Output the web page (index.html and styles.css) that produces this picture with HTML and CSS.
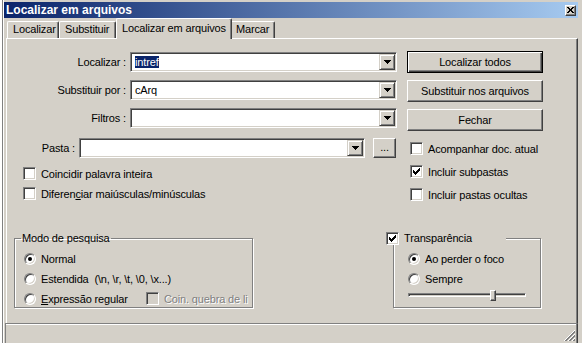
FILE: index.html
```html
<!DOCTYPE html>
<html lang="pt">

<head>
    <meta charset="UTF-8">
    <meta name="viewport" content="width=device-width, initial-scale=1.0">
    <title>Localizar em arquivos</title>
    <link rel="stylesheet" href="styles.css">
</head>

<body>
    <div class="window">
        <div class="titlebar">
            <span class="title">Localizar em arquivos</span>
            <span class="close-btn">
                <svg width="7" height="6" viewBox="0 0 7 6" shape-rendering="crispEdges">
                    <path d="M0 0h2v1h-2z M5 0h2v1h-2z M1 1h2v1h-2z M4 1h2v1h-2z M2 2h3v2h-3z M1 4h2v1h-2z M4 4h2v1h-2z M0 5h2v1h-2z M5 5h2v1h-2z" fill="#000" />
                </svg>
            </span>
        </div>

        <div class="tabs">
            <div class="tab tab-find">Localizar</div>
            <div class="tab tab-replace">Substituir</div>
            <div class="tab tab-files active">Localizar em arquivos</div>
            <div class="tab tab-mark">Marcar</div>
        </div>

        <div class="panel">
            <div class="top">
                <div class="fields">
                    <div class="field-row">
                        <label class="field-label">Localizar :</label>
                        <div class="combo combo-wide">
                            <span class="combo-text"><span class="selected">intref</span></span>
                            <span class="combo-btn"><svg width="7" height="4" viewBox="0 0 7 4" shape-rendering="crispEdges"><path d="M0 0h7v1H0z M1 1h5v1H1z M2 2h3v1H2z M3 3h1v1H3z" fill="#000" /></svg></span>
                        </div>
                    </div>
                    <div class="field-row">
                        <label class="field-label">Substituir por :</label>
                        <div class="combo combo-wide">
                            <span class="combo-text">cArq</span>
                            <span class="combo-btn"><svg width="7" height="4" viewBox="0 0 7 4" shape-rendering="crispEdges"><path d="M0 0h7v1H0z M1 1h5v1H1z M2 2h3v1H2z M3 3h1v1H3z" fill="#000" /></svg></span>
                        </div>
                    </div>
                    <div class="field-row">
                        <label class="field-label">Filtros :</label>
                        <div class="combo combo-wide">
                            <span class="combo-text"></span>
                            <span class="combo-btn"><svg width="7" height="4" viewBox="0 0 7 4" shape-rendering="crispEdges"><path d="M0 0h7v1H0z M1 1h5v1H1z M2 2h3v1H2z M3 3h1v1H3z" fill="#000" /></svg></span>
                        </div>
                    </div>
                    <div class="field-row folder">
                        <label class="field-label">Pasta :</label>
                        <div class="combo combo-folder">
                            <span class="combo-text"></span>
                            <span class="combo-btn"><svg width="7" height="4" viewBox="0 0 7 4" shape-rendering="crispEdges"><path d="M0 0h7v1H0z M1 1h5v1H1z M2 2h3v1H2z M3 3h1v1H3z" fill="#000" /></svg></span>
                        </div>
                        <span class="btn browse-btn">...</span>
                    </div>

                    <div class="check-row first">
                        <span class="checkbox"></span>
                        <span>Coincidir palavra inteira</span>
                    </div>
                    <div class="check-row">
                        <span class="checkbox"></span>
                        <span>Diferen<u>c</u>iar maiúsculas/minúsculas</span>
                    </div>
                </div>

                <div class="actions">
                    <span class="btn default">Localizar todos</span>
                    <span class="btn">Substituir nos arquivos</span>
                    <span class="btn">Fechar</span>

                    <div class="check-row">
                        <span class="checkbox"></span>
                        <span>Acompanhar doc. atual</span>
                    </div>
                    <div class="check-row">
                        <span class="checkbox"><svg width="7" height="7" viewBox="0 0 7 7" shape-rendering="crispEdges"><path d="M6 0h1v1h-1z M5 1h2v1h-2z M0 2h1v1h-1z M4 2h3v1h-3z M0 3h2v1h-2z M3 3h3v1h-3z M0 4h5v1h-5z M1 5h3v1h-3z M2 6h1v1h-1z" fill="#000" /></svg></span>
                        <span>Incluir subpastas</span>
                    </div>
                    <div class="check-row">
                        <span class="checkbox"></span>
                        <span>Incluir pastas ocultas</span>
                    </div>
                </div>
            </div>

            <div class="groups">
                <fieldset class="group group-mode">
                    <legend>Modo de pesquisa</legend>
                    <div class="group-body">
                        <div class="radio-row">
                            <span class="radio checked"></span>
                            <span>Normal</span>
                        </div>
                        <div class="radio-row">
                            <span class="radio"></span>
                            <span>Estendida&nbsp; (\n, \r, \t, \0, \x...)</span>
                        </div>
                        <div class="radio-row">
                            <span class="radio"></span>
                            <span class="opt-regex"><u>E</u>xpressão regular</span>
                            <span class="checkbox disabled"></span>
                            <span class="disabled-text">Coin. quebra de li</span>
                        </div>
                    </div>
                </fieldset>

                <fieldset class="group group-transp">
                    <legend>
                        <span class="checkbox"><svg width="7" height="7" viewBox="0 0 7 7" shape-rendering="crispEdges"><path d="M6 0h1v1h-1z M5 1h2v1h-2z M0 2h1v1h-1z M4 2h3v1h-3z M0 3h2v1h-2z M3 3h3v1h-3z M0 4h5v1h-5z M1 5h3v1h-3z M2 6h1v1h-1z" fill="#000" /></svg></span>
                        <span>Transparência</span>
                    </legend>
                    <div class="group-body">
                        <div class="radio-row">
                            <span class="radio checked"></span>
                            <span>Ao perder o foco</span>
                        </div>
                        <div class="radio-row">
                            <span class="radio"></span>
                            <span>Sempre</span>
                        </div>
                        <div class="slider">
                            <span class="slider-thumb"></span>
                        </div>
                    </div>
                </fieldset>
            </div>
        </div>

        <div class="statusbar">
            <svg class="grip" width="12" height="12" viewBox="0 0 12 12" shape-rendering="crispEdges">
                <path d="M11 0L0 11 M11 4L4 11 M11 8L8 11" stroke="#fff" />
                <path d="M11 1L1 11 M11 2L2 11 M11 5L5 11 M11 6L6 11 M11 9L9 11 M11 10L10 11" stroke="#808080" />
            </svg>
        </div>
    </div>
</body>

</html>
```

FILE: styles.css
```css
* {
    box-sizing: border-box;
}

body {
    margin: 0;
    width: 582px;
    height: 343px;
    overflow: hidden;
    background-color: #fff;
    font-family: "Liberation Sans", Arial, sans-serif;
    font-size: 11px;
    letter-spacing: -0.15px;
    color: #000;
}

.window {
    display: flex;
    flex-direction: column;
    width: 580px;
    height: 343px;
    margin-left: 2px;
    padding: 2px 0 0 1px;
    background-color: #d4d0c8;
    border-left: 1px solid #808080;
    box-shadow: inset 1px 0 #fff;
}

/* title bar */
.titlebar {
    display: flex;
    align-items: center;
    justify-content: space-between;
    flex-shrink: 0;
    height: 16px;
    margin-right: 4px;
    padding: 0 2px;
    background: linear-gradient(to right, #0a246a, #a6caf0);
    color: #fff;
    font-size: 12px;
    font-weight: bold;
    letter-spacing: 0;
}

.close-btn {
    display: flex;
    align-items: center;
    justify-content: center;
    width: 11px;
    height: 11px;
    background-color: #d4d0c8;
    border: 1px solid;
    border-color: #fff #404040 #404040 #fff;
    box-shadow: inset -1px -1px #808080;
}

/* tabs */
.tabs {
    display: flex;
    align-items: flex-end;
    flex-shrink: 0;
    height: 20px;
    margin-left: 2px;
    padding-left: 1px;
}

.tab {
    height: 17px;
    padding-left: 5px;
    line-height: 15px;
    white-space: nowrap;
    border: 1px solid;
    border-bottom: 0;
    border-color: #fff #404040 #fff #fff;
    border-radius: 2px 2px 0 0;
    box-shadow: inset -1px 0 #808080;
}

.tab-find {
    width: 52px;
}

.tab-replace {
    width: 57px;
}

.tab-files {
    width: 116px;
}

.tab-mark {
    width: 45px;
}

.tab.active {
    position: relative;
    z-index: 1;
    height: 21px;
    margin: 0 -2px -1px 0;
    padding-top: 1px;
    line-height: 17px;
    background-color: #d4d0c8;
}

/* main panel */
.panel {
    flex-shrink: 0;
    width: 572px;
    height: 285px;
    margin-left: 2px;
    padding-top: 12px;
    border-top: 1px solid #fff;
    border-left: 1px solid #fff;
    border-right: 1px solid #404040;
    box-shadow: inset -1px 0 #808080;
}

.top {
    display: grid;
    grid-template-columns: 390px 136px;
    column-gap: 10px;
}

.fields,
.actions {
    display: flex;
    flex-direction: column;
}

.field-row {
    display: flex;
    align-items: center;
    height: 20px;
    margin-top: 8px;
}

.field-row:first-child {
    margin-top: 1px;
}

.field-row.folder {
    margin-top: 10px;
}

.field-label {
    width: 119px;
    margin-right: 4px;
    text-align: right;
    white-space: nowrap;
}

.folder .field-label {
    width: 68px;
}

/* combo boxes */
.combo {
    display: flex;
    height: 20px;
    padding: 1px;
    background-color: #fff;
    border: 1px solid;
    border-color: #808080 #fff #fff #808080;
    box-shadow: inset 1px 1px #404040, inset -1px -1px #d4d0c8;
}

.combo-wide {
    width: 267px;
}

.combo-folder {
    width: 286px;
    margin-right: 8px;
}

.combo-text {
    flex: 1;
    padding-left: 3px;
    line-height: 16px;
    white-space: nowrap;
}

.selected {
    background-color: #0a246a;
    color: #fff;
}

.combo-btn {
    display: flex;
    align-items: center;
    justify-content: center;
    width: 16px;
    height: 16px;
    background-color: #d4d0c8;
    border: 1px solid;
    border-color: #d4d0c8 #404040 #404040 #d4d0c8;
    box-shadow: inset 1px 1px #fff, inset -1px -1px #808080;
}

/* buttons */
.btn {
    display: flex;
    align-items: center;
    justify-content: center;
    height: 22px;
    white-space: nowrap;
    background-color: #d4d0c8;
    border: 1px solid;
    border-color: #fff #404040 #404040 #fff;
    box-shadow: inset -1px -1px #808080;
}

.btn.default {
    border-color: #000;
    box-shadow: inset 1px 1px #fff, inset -1px -1px #404040, inset -2px -2px #808080;
}

.btn + .btn {
    margin-top: 7px;
}

.browse-btn {
    width: 23px;
    height: 20px;
    padding-bottom: 2px;
}

/* checkboxes and radios */
.check-row,
.radio-row {
    display: flex;
    align-items: center;
    gap: 5px;
    height: 13px;
    white-space: nowrap;
}

.fields .check-row {
    margin: 7px 0 0 16px;
}

.fields .check-row.first {
    margin-top: 9px;
}

.actions .check-row {
    margin: 10px 0 0 3px;
}

.actions .btn + .check-row {
    margin-top: 11px;
}

.checkbox {
    display: flex;
    align-items: center;
    justify-content: center;
    flex-shrink: 0;
    width: 13px;
    height: 13px;
    background-color: #fff;
    border: 1px solid;
    border-color: #808080 #fff #fff #808080;
    box-shadow: inset 1px 1px #404040, inset -1px -1px #d4d0c8;
}

.checkbox.disabled {
    background-color: #d4d0c8;
}

.disabled-text {
    color: #808080;
    text-shadow: 1px 1px #fff;
}

.radio {
    display: flex;
    align-items: center;
    justify-content: center;
    flex-shrink: 0;
    width: 12px;
    height: 12px;
    background-color: #fff;
    border: 1px solid;
    border-color: #808080 #fff #fff #808080;
    border-radius: 50%;
    box-shadow: inset 1px 1px #404040, inset -1px -1px #d4d0c8;
}

.radio.checked::after {
    content: "";
    width: 4px;
    height: 4px;
    border-radius: 50%;
    background-color: #000;
}

.opt-regex {
    width: 100px;
}

/* group boxes */
.groups {
    display: flex;
    align-items: flex-start;
    margin-top: 31px;
    padding-left: 7px;
}

.group {
    min-width: 0;
    height: 76px;
    margin: 0;
    padding: 0;
    border: 1px solid #808080;
    box-shadow: inset 1px 1px #fff, 1px 1px #fff;
}

.group legend {
    height: 13px;
    line-height: 13px;
    white-space: nowrap;
}

.group-mode {
    width: 239px;
}

.group-mode legend {
    margin-left: 6px;
    padding: 0 1px;
}

.group-transp {
    width: 148px;
    margin-left: 140px;
}

.group-transp legend {
    display: flex;
    align-items: center;
    gap: 5px;
    width: 120px;
    margin-left: -8px;
    padding: 0;
    background-color: #d4d0c8;
}

.group-body {
    display: flex;
    flex-direction: column;
    gap: 7px;
    padding: 7px 0 0 9px;
}

.group-transp .group-body {
    padding-left: 14px;
}

/* trackbar */
.slider {
    display: flex;
    align-items: center;
    width: 118px;
    height: 4px;
    margin-top: 1px;
    border: 1px solid;
    border-color: #808080 #fff #fff #808080;
    box-shadow: inset 1px 1px #404040;
}

.slider-thumb {
    flex-shrink: 0;
    width: 6px;
    height: 11px;
    margin-left: 81px;
    background-color: #d4d0c8;
    border: 1px solid;
    border-color: #fff #404040 #404040 #fff;
    box-shadow: inset -1px -1px #808080;
}

/* status bar */
.statusbar {
    display: flex;
    align-items: flex-end;
    justify-content: flex-end;
    flex: 1;
    width: 573px;
    margin-left: 1px;
    border-top: 1px solid #808080;
    border-left: 1px solid #808080;
    border-right: 1px solid #404040;
    box-shadow: inset -1px 0 #808080, inset 0 1px #fff;
}

.grip {
    margin: 0 1px 1px 0;
}
```
